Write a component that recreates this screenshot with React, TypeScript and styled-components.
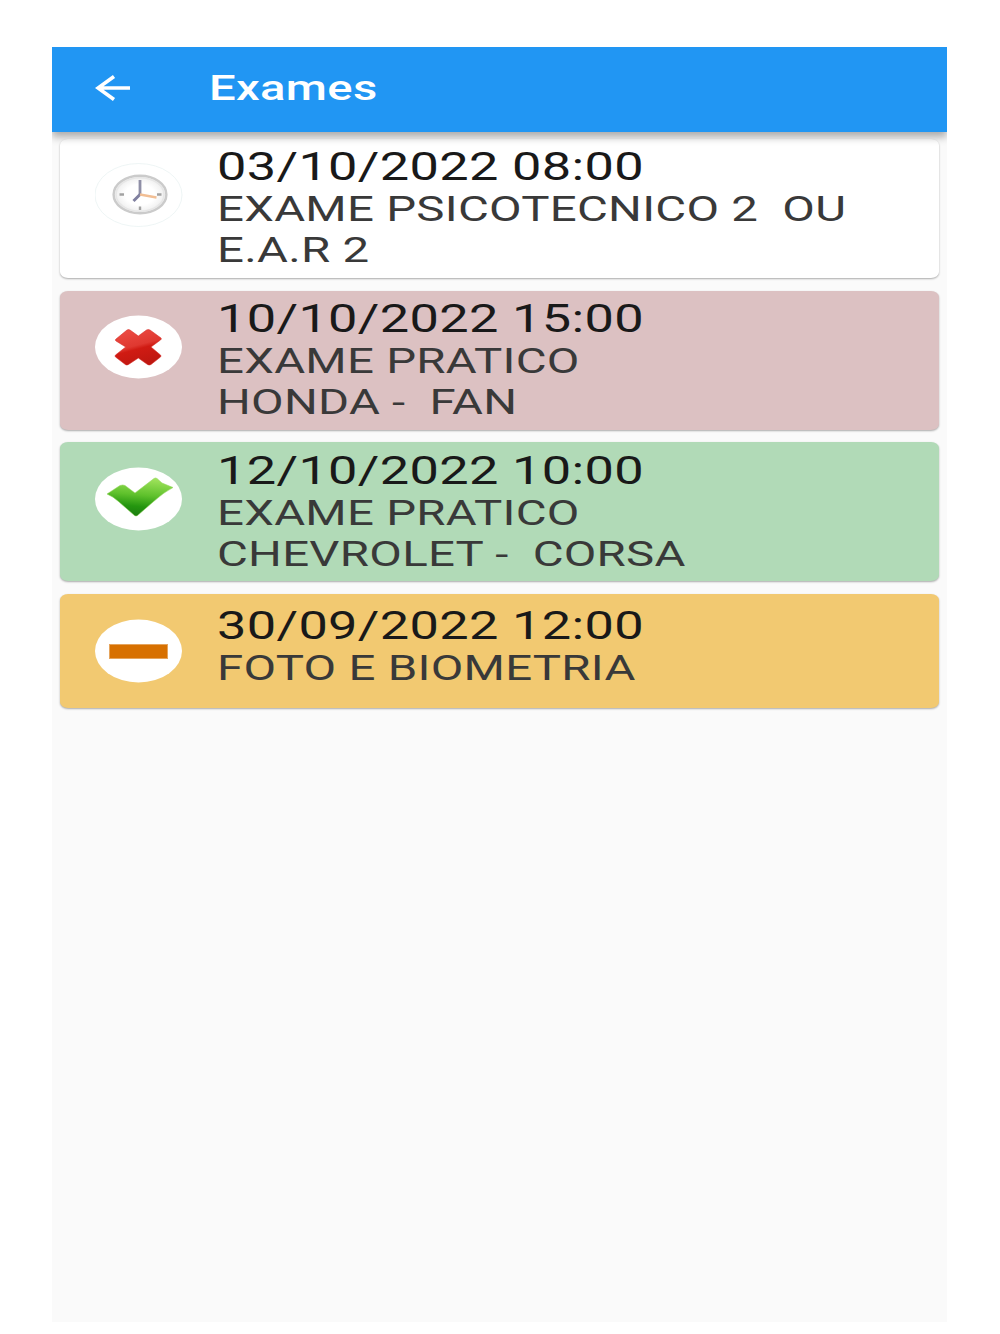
import React from 'react';
import styled, { createGlobalStyle } from 'styled-components';

const GlobalStyle = createGlobalStyle`
  * { box-sizing: border-box; }
  body { margin: 0; background: #fff; font-family: Roboto, "Liberation Sans", sans-serif; }
`;

const Page = styled.div`
  width: 1000px;
  height: 1334px;
  padding: 47px 53px 12px 52px;
  background: #fff;
  overflow: hidden;
`;

const Screen = styled.div`
  display: flex;
  flex-direction: column;
  height: 1275px;
  background: #fafafa;
`;

const AppBar = styled.header`
  flex: none;
  display: flex;
  align-items: center;
  height: 85px;
  padding-left: 43px;
  background: #2196f3;
  box-shadow: 0 5px 8px rgba(0, 0, 0, 0.32);
  clip-path: inset(0 0 -20px 0);
  z-index: 1;
`;

const BackIcon = styled.svg`
  display: block;
  width: 36px;
  height: 28px;
  margin-top: -3px;
`;

const Title = styled.h1`
  margin: -3px 0 0 77.5px;
  color: #fff;
  font-size: 34.6px;
  line-height: 42px;
  font-weight: 500;
  letter-spacing: 0.24px;
  white-space: pre;
  transform: scaleX(1.365);
  transform-origin: left center;
`;

const List = styled.main`
  display: flex;
  flex-direction: column;
  gap: 12.8px;
  padding: 6.8px 8.4px 0;
`;

const Card = styled.article<{ $color: string; $compact?: boolean }>`
  display: flex;
  height: ${(p) => (p.$compact ? 113.6 : 139)}px;
  padding-left: 34.6px;
  border-radius: 8px / 6px;
  background: ${(p) => p.$color};
  box-shadow: 0 1px 2px rgba(0, 0, 0, 0.32);
`;

const Avatar = styled.svg`
  flex: none;
  display: block;
  width: 88px;
  height: 64px;
  margin-top: 24.5px;
`;

const Details = styled.div<{ $compact?: boolean }>`
  margin-left: 34.2px;
  padding-top: ${(p) => (p.$compact ? 9 : 5.6)}px;
  transform: scaleX(1.37);
  transform-origin: left top;
`;

const DateTime = styled.div`
  height: 45px;
  color: #191919;
  font-size: 38.2px;
  line-height: 46px;
  letter-spacing: 0.24px;
  white-space: pre;
`;

const Line = styled.div`
  height: 41px;
  color: #393939;
  font-size: 34.6px;
  line-height: 41px;
  letter-spacing: 0.2px;
  white-space: pre;
`;

type Status = 'pending' | 'failed' | 'passed' | 'absent';

const colors: Record<Status, string> = {
  pending: '#ffffff',
  failed: '#dcc1c2',
  passed: '#b1dab7',
  absent: '#f2c971',
};

function Glyph({ status }: { status: Status }) {
  switch (status) {
    case 'pending':
      return (
        <>
          <ellipse cx="45" cy="31.5" rx="26.4" ry="18.8" fill="url(#face)" stroke="#cbcbcb" strokeWidth="2.4" />
          <ellipse cx="45" cy="31.5" rx="24" ry="16.8" fill="none" stroke="#e6e6e6" strokeWidth="1.6" />
          <path d="M24.500 31.5h4.500M62 31.500h4.500M45 43.500v3.500" stroke="#a2a2a2" strokeWidth="2.4" fill="none" />
          <path d="M45 17v14.500" stroke="#8f8fa6" strokeWidth="2.8" fill="none" />
          <path d="M45.500 31L38.500 38" stroke="#8080a0" strokeWidth="3" fill="none" />
          <path d="M45 31.500l16.500 3" stroke="#f2bf95" strokeWidth="2.300" fill="none" />
        </>
      );
    case 'failed':
      return (
        <path
          d="M21 24L32 15Q33.500 14 35 15L43.300 21 51.500 15Q53.300 14 55 15L66 23Q67 24 65.500 25L56 32 65.500 40Q66.500 41 65.500 42L56 49.500Q54.300 50.500 52.500 49.500L43.300 43 33.500 49.500Q31.700 50.500 30.300 49.500L20.500 42Q19.500 41 20.500 40L30.700 32 21 26Q19.500 25 21 24Z"
          fill="url(#red)"
          stroke="#d62a24"
          strokeOpacity="0.55"
          strokeLinejoin="round"
        />
      );
    case 'passed':
      return (
        <path
          d="M12 27L25 18.500Q28 17.500 30 18.500L40 26 59 11.500Q60.500 10.500 62 11.500L67 16 78 20.500Q69 25 58 35L42.500 48.500Q41 49.500 39.500 48.500L23.500 34.500Q19 30 12 27Z"
          fill="url(#green)"
          stroke="#8fd35a"
          strokeOpacity="0.55"
          strokeLinejoin="round"
        />
      );
    case 'absent':
      return <rect x="14.500" y="25.500" width="58" height="14" fill="#d77000" stroke="#e5a45d" />;
  }
}

const exams: { status: Status; date: string; lines: string[] }[] = [
  { status: 'pending', date: '03/10/2022 08:00', lines: ['EXAME PSICOTECNICO 2  OU', 'E.A.R 2'] },
  { status: 'failed', date: '10/10/2022 15:00', lines: ['EXAME PRATICO', 'HONDA -  FAN'] },
  { status: 'passed', date: '12/10/2022 10:00', lines: ['EXAME PRATICO', 'CHEVROLET -  CORSA'] },
  { status: 'absent', date: '30/09/2022 12:00', lines: ['FOTO E BIOMETRIA'] },
];

export default function App() {
  return (
    <Page>
      <GlobalStyle />
      <Screen>
        <AppBar>
          <BackIcon viewBox="0 0 36 28" fill="none" stroke="#fff" strokeWidth="3.600">
            <path d="M35 14H3M19 2.500L3 14 19 25.500" />
          </BackIcon>
          <Title>Exames</Title>
        </AppBar>
        <List>
          {exams.map((exam) => {
            const compact = exam.lines.length === 1;
            return (
              <Card key={exam.date} $color={colors[exam.status]} $compact={compact}>
                <Avatar viewBox="0 0 88 64">
                  <defs>
                    <radialGradient id="face">
                      <stop offset="0.55" stopColor="#fff" />
                      <stop offset="1" stopColor="#ececec" />
                    </radialGradient>
                    <linearGradient id="red" x1="0.3" y1="0" x2="0.65" y2="1">
                      <stop offset="0" stopColor="#ec4b43" />
                      <stop offset="0.45" stopColor="#df3830" />
                      <stop offset="0.55" stopColor="#d01b13" />
                      <stop offset="1" stopColor="#bd1710" />
                    </linearGradient>
                    <linearGradient id="green" x1="0.6" y1="0" x2="0.45" y2="1">
                      <stop offset="0" stopColor="#a0e35c" />
                      <stop offset="0.45" stopColor="#5fc12c" />
                      <stop offset="0.75" stopColor="#24960f" />
                      <stop offset="1" stopColor="#1c7d10" />
                    </linearGradient>
                  </defs>
                  <ellipse cx="43.500" cy="32" rx="43.500" ry="31.500" fill="#fff" stroke={exam.status === 'pending' ? '#e3eeee' : 'none'} strokeWidth="0.6" />
                  <Glyph status={exam.status} />
                </Avatar>
                <Details $compact={compact}>
                  <DateTime>{exam.date}</DateTime>
                  {exam.lines.map((line) => (
                    <Line key={line}>{line}</Line>
                  ))}
                </Details>
              </Card>
            );
          })}
        </List>
      </Screen>
    </Page>
  );
}
